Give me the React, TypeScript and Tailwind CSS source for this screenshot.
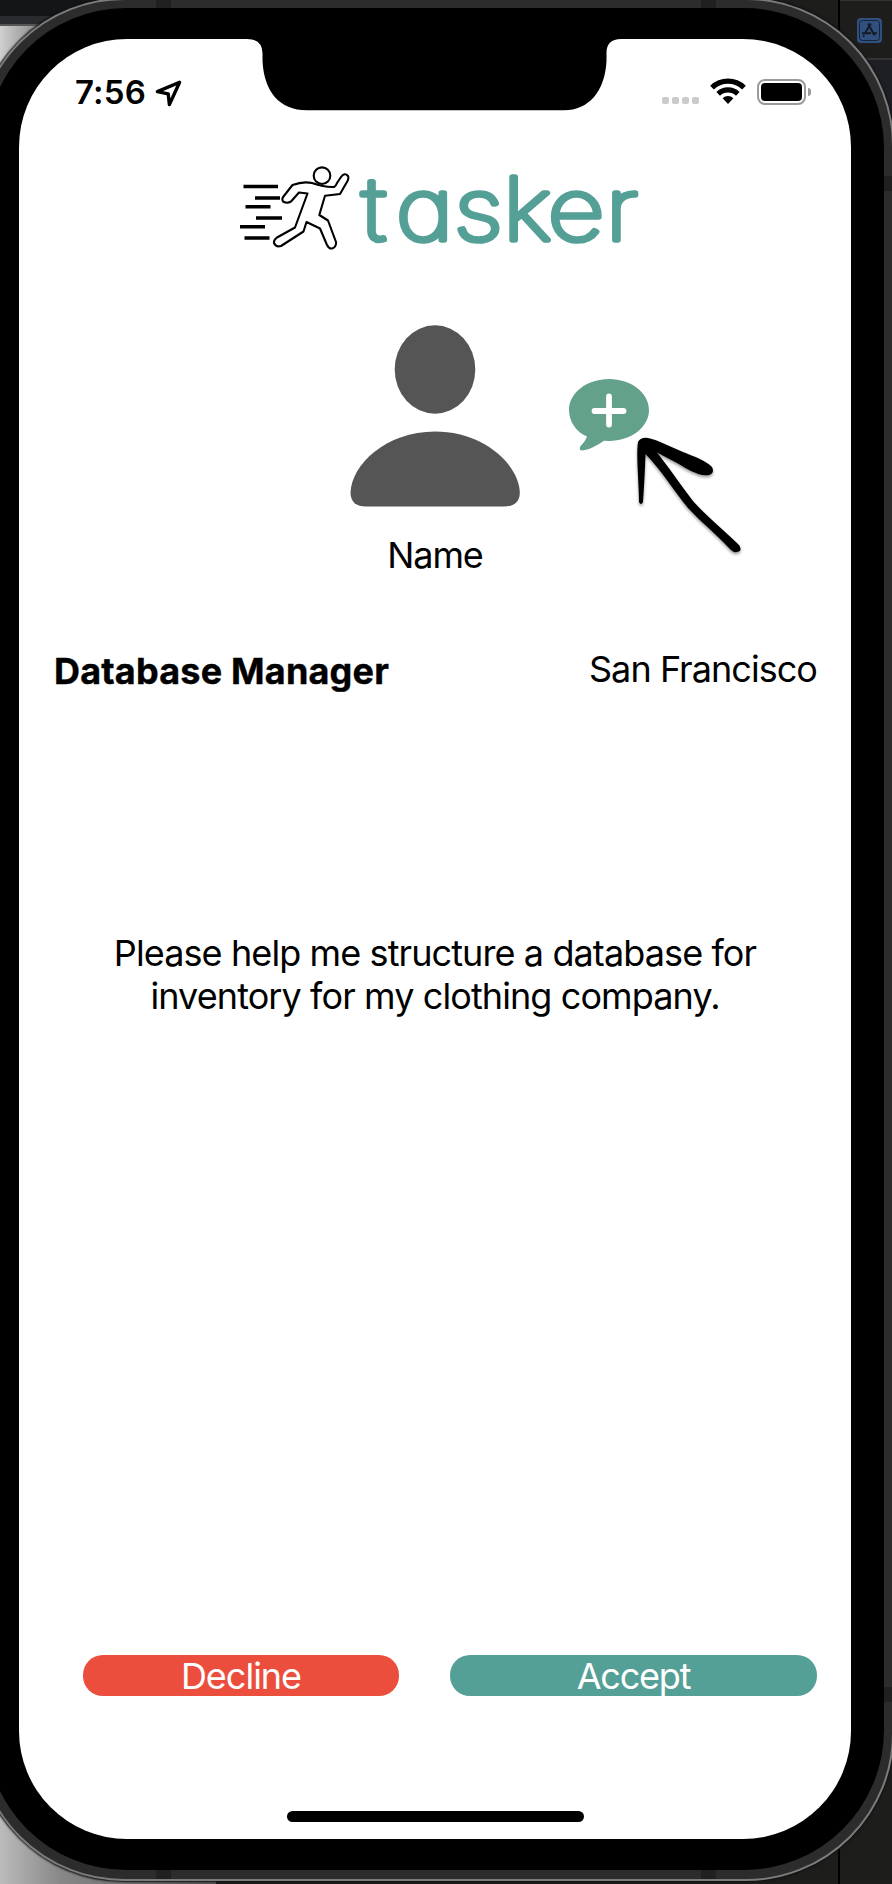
import React from "react";

function StatusBar() {
  return (
    <div className="flex h-[72px] items-start justify-between pl-[56px] pr-[40px] pt-[34px]">
      <div className="flex items-center gap-[9px]">
        <span className="mt-[1px] text-[33px] font-semibold leading-[36px] tracking-[0.2px]">7:56</span>
        <svg width="27" height="27" viewBox="0 0 27 27" className="mt-[3px]" fill="none" stroke="#000" strokeWidth="3.4" strokeLinejoin="round">
          <path d="M24.600 2.200 2.400 11.600l10.800 2.200 1.200 10.800z" />
        </svg>
      </div>
      <div className="flex items-start pt-[4px]">
        <div className="mt-[20px] flex gap-[3px]">
          {[0, 1, 2, 3].map((i) => (
            <div key={i} className="h-[7px] w-[7px] rounded-[2px] bg-[#cbcbcb]" />
          ))}
        </div>
        <svg width="36" height="26" viewBox="0 0 36 26" className="ml-[11px] mt-[1px]">
          <g fill="none" stroke="#000" strokeWidth="5.2">
            <path d="M2 9.6a23 23 0 0 1 32 0" />
            <path d="M8.2 15.8a14.2 14.2 0 0 1 19.6 0" />
          </g>
          <path d="M12.6 20.2a8 8 0 0 1 10.8 0L18 26z" />
        </svg>
        <div className="ml-[11px] mt-[2px] flex h-[26px] w-[49px] rounded-[8px] border-2 border-[#9b9b9b] p-[2px]">
          <div className="flex-1 rounded-[4px] bg-black" />
        </div>
        <div className="ml-[2px] mt-[11px] h-[8px] w-[3px] rounded-r-full bg-[#9b9b9b]" />
      </div>
    </div>
  );
}

function Runner() {
  return (
    <svg width="114" height="92" viewBox="236 160 114 92" className="block shrink-0" fill="none" stroke="#000" strokeWidth="2.1" strokeLinejoin="round">
      <path strokeWidth="3.6" d="M243.5 186.5H278M255 198H280M245.500 206.700H270.500M256 218H282M240 226.700H265M244.500 238H269.500" />
      <circle cx="322" cy="175.700" r="8.300" />
      <path d="M292.500 185 Q303 181 312 183 Q325 187.500 334 187 Q336 186 337 183 L341 177 Q344.500 172 348 176 Q349 178 347.500 181 L340 194 L325 195.700 L319.300 215 L328 220.500 L336 242 Q336.500 247 332 248.500 Q329 249 327 245 L320 228.500 L306.500 222 L303.500 231.500 L281 246 Q276 247.500 274 243 Q273.500 240 277 237.500 L295 227.500 L307.500 193.500 L299 192.500 L291 201.500 Q287 204 283 201.500 Q281.500 199 283.500 196.500 Z" />
    </svg>
  );
}

function Logo() {
  return (
    <div className="flex h-[100px] items-start pl-[217px]">
      <div className="mt-[49px]"><Runner /></div>
      <svg width="310" height="130" viewBox="350 140 310 130" className="mt-[29px] block shrink-0 overflow-visible">
        <text
          transform="translate(350 239.500) scale(1.15 1)"
          x="10.500 40 90.500 133 172 222.500"
          y="0"
          fill="#55a096"
          stroke="#55a096"
          strokeWidth="5.6"
          strokeLinejoin="round"
          strokeLinecap="round"
          className="text-[86px] font-thin [font-feature-settings:'cv11']"
        >
          tasker
        </text>
      </svg>
    </div>
  );
}

function Profile() {
  return (
    <div className="relative mt-[114px] flex h-[247px] flex-col items-center">
      <svg width="170" height="182" viewBox="350 325 170 182" className="block shrink-0" fill="#555">
        <ellipse cx="435" cy="369.500" rx="40.300" ry="44.200" />
        <path d="M350.500 493 C351 465 386 431.500 435 431.500 C484 431.500 519.500 465 519.800 493 Q519.500 506.500 504 506.500 H366 Q351 506.500 350.500 493Z" />
      </svg>
      <span className="mt-[26px] text-[36px] leading-[44px] tracking-[-1.1px]">Name</span>
      <svg width="185" height="185" viewBox="565 375 185 185" className="absolute left-[546px] top-[50px]">
        <path fill="#63a18a" d="M609 379c22.300 0 40 14 40 31s-18 31-40 31l-5-.2c-7 5-15 9-22 9.800-3 0-2.500-3-1-5 3-3 5-6 6-9-11.300-5-18-15.600-18-26.600 0-17 17.700-31 40-31z" />
        <path d="M609 396.500v28M594.500 411h29" stroke="#fff" strokeWidth="5.800" strokeLinecap="round" />
        <path className="[filter:drop-shadow(0_2px_1.500px_rgba(0,0,0,0.4))]" d="M638 442Q641 437 648 438C658 440 671 447 683 452C695 457 705 460 712 467Q715 473 709 475C700 477 687 469 677 463L657 452.500C667 465 680 484 693 501C706 516 724 530 739 545Q743 551 737 552Q733 553 729 548C715 533 700 521 688 508C674 491 662 471 645.500 454C645 470 644 487 643 502Q641 506 639 502C639 482 636 457 638 442Z" />
      </svg>
    </div>
  );
}

function Screen() {
  return (
    <div className="relative flex h-[1800px] w-[832px] shrink-0 flex-col overflow-hidden rounded-[108px] bg-white text-black">
      <svg width="374" height="72" viewBox="0 0 374 72" className="absolute left-[228px] top-0">
        <path d="M0 0H374Q359.500 0 359.500 14V22C358 52 342 71.300 317 71.300H60C32 71.300 17 52 15.500 22V14Q15 0 0 0Z" />
      </svg>
      <StatusBar />
      <Logo />
      <Profile />
      <div className="mt-[75px] flex h-[48px] items-start justify-between pl-[35px] pr-[34px]">
        <span className="mt-[2px] text-[36px] font-bold leading-[44px] tracking-[0.2px] [-webkit-text-stroke:0.4px_black]">Database Manager</span>
        <span className="text-[36px] leading-[44px] tracking-[-0.95px]">San Francisco</span>
      </div>
      <p className="mt-[237px] text-center text-[36px] leading-[43px] tracking-[-0.9px]">
        Please help me structure a database for
        <br />
        inventory for my clothing company.
      </p>
      <div className="mt-auto flex gap-[51px] pl-[64px] pr-[34px]">
        <button className="flex h-[41px] w-[316px] items-center justify-center rounded-[20px] bg-[#eb4e3d] text-[36px] leading-[41px] tracking-[-1px] text-white"><span className="mt-[2px]">Decline</span></button>
        <button className="flex h-[41px] flex-1 items-center justify-center rounded-[20px] bg-[#55a096] text-[36px] leading-[41px] tracking-[-1.2px] text-white"><span className="mt-[2px]">Accept</span></button>
      </div>
      <div className="mb-[17px] mt-[115px] h-[11px] w-[297px] self-center rounded-full bg-black" />
    </div>
  );
}

function Desktop() {
  return (
    <div className="absolute inset-0 flex justify-between bg-[#1d1d1c]">
      <div className="flex w-[216px] flex-col">
        <div className="h-[16px] bg-[#141517]" />
        <div className="h-[8px] bg-[#292b2f]" />
        <div className="h-[2px] bg-[#555]" />
        <div className="h-[900px] bg-[linear-gradient(90deg,#cfcfcf,#999_30px)]" />
        <div className="flex-1 bg-[linear-gradient(90deg,#bbb,#888_60px,#555)]" />
      </div>
      <div className="w-[54px] border-l-2 border-black">
        <div className="flex h-[60px] justify-end border-b-2 border-[#333] border-t border-t-[#333] pr-[10px] pt-[17px]">
          <svg width="25" height="25" viewBox="0 0 25 25">
            <rect width="25" height="25" rx="4" fill="#30507f" />
            <rect x="2.500" y="2.500" width="20" height="20" rx="3" fill="none" stroke="#182333" />
            <path d="M11 5.500 17.500 17.500M14 5.500 8 15M5 15.200h9M17 15.200h3M7 17.300l-.8 1.400" stroke="#151b26" strokeWidth="2" />
          </svg>
        </div>
        <div className="h-[112px] bg-[#1d1f25]" />
      </div>
    </div>
  );
}

export default function App() {
  return (
    <div className="relative h-[1884px] w-[892px] overflow-hidden bg-[#1d1d1c] font-['Inter','Liberation_Sans',sans-serif]">
      <Desktop />
      <div className="absolute left-[-24px] top-[-2px] flex h-[1883px] w-[918px] rounded-[148px] border-2 border-[#7c7c7c] bg-[#2c2c2c] pl-[8px] pt-[8px] shadow-[0_0_2px_1px_#111]">
        <div className="absolute left-[178px] top-0 h-full w-[15px] bg-[#202020]" />
        <div className="absolute left-[723px] top-0 h-full w-[15px] bg-[#202020]" />
        <div className="absolute right-0 top-[176px] h-[15px] w-[8px] bg-[#202020]" />
        <div className="absolute bottom-[177px] right-0 h-[15px] w-[8px] bg-[#202020]" />
        <div className="relative flex h-[1862px] w-[898px] rounded-[140px] bg-black pl-[33px] pt-[31px]">
          <Screen />
        </div>
      </div>
    </div>
  );
}
